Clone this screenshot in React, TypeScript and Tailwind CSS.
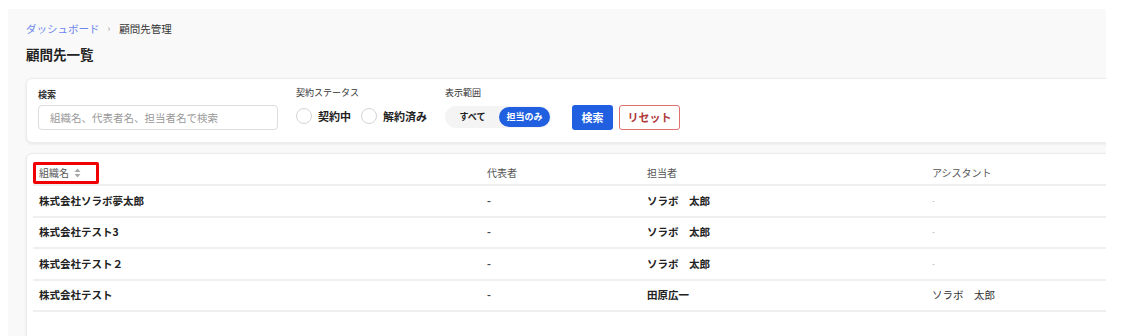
import React from "react";

const font = { fontFamily: '"Noto Sans CJK JP", "Noto Sans", sans-serif' };

type Row = { org: string; rep: string; owner: string; assistant: string };

const rows: Row[] = [
  { org: "株式会社ソラボ夢太郎", rep: "-", owner: "ソラボ　太郎", assistant: "-" },
  { org: "株式会社テスト3", rep: "-", owner: "ソラボ　太郎", assistant: "-" },
  { org: "株式会社テスト２", rep: "-", owner: "ソラボ　太郎", assistant: "-" },
  { org: "株式会社テスト", rep: "-", owner: "田原広一", assistant: "ソラボ　太郎" },
];

function Radio({ label }: { label: string }) {
  return (
    <label className="flex items-center gap-[6px]">
      <span className="w-[16px] h-[16px] rounded-full border border-[#d4d4d4] bg-white" />
      <span className="text-[11px] font-bold text-[#222]">{label}</span>
    </label>
  );
}

function SortIcon() {
  return (
    <svg width="7" height="10" viewBox="0 0 7 10" className="ml-[5px]">
      <path d="M3.5 0.5 L6.5 4 L0.5 4 Z" fill="#a8a8a8" />
      <path d="M3.5 9.5 L6.5 6 L0.5 6 Z" fill="#a8a8a8" />
    </svg>
  );
}

export default function App() {
  return (
    <div className="w-[1124px] h-[336px] bg-white overflow-hidden" style={font}>
      <div className="ml-[8px] mt-[9px] w-[1098px] h-[327px] bg-[#f9f9f9] overflow-hidden pl-[18px] pt-[12px]">
        {/* breadcrumb */}
        <div className="flex items-center text-[10.5px] leading-[16px]">
          <span className="text-[#6b86ee]">ダッシュボード</span>
          <span className="ml-[8px] mr-[9px] text-[#999] text-[9px]">›</span>
          <span className="text-[#333]">顧問先管理</span>
        </div>
        <h1 className="mt-[7px] text-[13.5px] leading-[20px] font-bold text-[#222]">顧問先一覧</h1>

        {/* search card */}
        <div className="mt-[14px] w-[1110px] h-[65px] bg-white rounded-[6px] border border-[#ececec] shadow-[0_1px_3px_rgba(0,0,0,0.08)] pl-[11px] pt-[9px] flex items-start">
          <div className="flex flex-col w-[240px]">
            <span className="text-[9px] leading-[14px] text-[#333] font-bold">検索</span>
            <div className="mt-[3px] h-[25px] rounded-[4px] border border-[#dcdcdc] flex items-center px-[11px] text-[10.5px] text-[#9a9a9a]">
              組織名、代表者名、担当者名で検索
            </div>
          </div>
          <div className="flex flex-col ml-[18px] -mt-[2px]">
            <span className="text-[9px] leading-[14px] text-[#333]">契約ステータス</span>
            <div className="mt-[8px] flex items-center gap-[10px]">
              <Radio label="契約中" />
              <Radio label="解約済み" />
            </div>
          </div>
          <div className="flex flex-col ml-[18px] -mt-[2px]">
            <span className="text-[9px] leading-[14px] text-[#333]">表示範囲</span>
            <div className="mt-[6px] w-[106px] h-[22px] rounded-full bg-[#f4f4f4] flex items-center p-[1px]">
              <span className="flex-1 text-center text-[9px] font-bold text-[#222]">すべて</span>
              <span className="w-[51px] h-[20px] rounded-full bg-[#1f5fe0] text-white text-[9px] font-bold flex items-center justify-center">
                担当のみ
              </span>
            </div>
          </div>
          <div className="flex items-center gap-[6px] ml-[21px] mt-[17px]">
            <button className="w-[41px] h-[25px] rounded-[3px] bg-[#1f5fe0] text-white text-[11px] font-bold">検索</button>
            <button className="w-[61px] h-[25px] rounded-[3px] border border-[#e07070] text-[#b03a3a] text-[11px] font-bold bg-white">
              リセット
            </button>
          </div>
        </div>

        {/* table card */}
        <div className="mt-[10px] w-[1110px] h-[200px] bg-white rounded-[6px] border border-[#ececec] shadow-[0_1px_3px_rgba(0,0,0,0.08)] pl-[6px] pt-[7px]">
          <div className="flex h-[25px] items-center border-b-2 border-[#efefef] text-[10px] text-[#555]">
            <div className="w-[448px] h-full flex items-center">
              <div className="w-[66px] h-[22px] border-[3px] border-[#f00000] rounded-[2px] flex items-center pl-[3px]">
                <span>組織名</span>
                <SortIcon />
              </div>
            </div>
            <div className="w-[160px] pl-[6px]">代表者</div>
            <div className="w-[285px] pl-[6px]">担当者</div>
            <div className="flex-1 pl-[6px]">アシスタント</div>
          </div>
          {rows.map((r) => (
            <div key={r.org} className="flex h-[31.5px] items-center border-b-2 border-[#efefef] text-[10.5px]">
              <div className="w-[448px] pl-[6px] font-bold text-[#222]">{r.org}</div>
              <div className="w-[160px] pl-[6px] text-[#444] font-bold">{r.rep}</div>
              <div className="w-[285px] pl-[6px] font-bold text-[#222]">{r.owner}</div>
              <div className={r.assistant === "-" ? "flex-1 pl-[6px] text-[#aaa] text-[8px]" : "flex-1 pl-[6px] text-[#333]"}>
                {r.assistant}
              </div>
            </div>
          ))}
        </div>
      </div>
    </div>
  );
}
